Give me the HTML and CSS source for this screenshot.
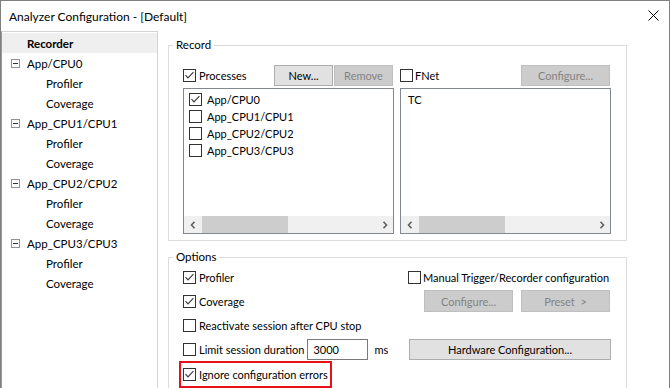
FILE: index.html
```html
<!DOCTYPE html>
<html lang="en">
<head>
    <meta charset="UTF-8">
    <meta name="viewport" content="width=device-width, initial-scale=1.0">
    <title>Analyzer Configuration</title>
    <link rel="stylesheet" href="styles.css">
</head>
<body>

<div class="window">
    <div class="titlebar">
        <span class="title">Analyzer Configuration - [Default]</span>
        <svg class="close" width="11" height="11" viewBox="0 0 11 11">
            <path d="M0.5 0.5 L10.5 10.5 M10.5 0.5 L0.5 10.5" stroke="#000" stroke-width="1" fill="none"/>
        </svg>
    </div>

    <div class="main">
        <!-- Navigation tree -->
        <ul class="tree">
            <li class="row root selected">Recorder</li>
            <li class="row node"><span class="toggle"></span>App/CPU0</li>
            <li class="row leaf">Profiler</li>
            <li class="row leaf">Coverage</li>
            <li class="row node"><span class="toggle"></span>App_CPU1/CPU1</li>
            <li class="row leaf">Profiler</li>
            <li class="row leaf">Coverage</li>
            <li class="row node"><span class="toggle"></span>App_CPU2/CPU2</li>
            <li class="row leaf">Profiler</li>
            <li class="row leaf">Coverage</li>
            <li class="row node"><span class="toggle"></span>App_CPU3/CPU3</li>
            <li class="row leaf">Profiler</li>
            <li class="row leaf">Coverage</li>
        </ul>

        <div class="content">
            <!-- Record -->
            <fieldset class="group record">
                <legend>Record</legend>
                <div class="record-cols">
                    <div class="col">
                        <div class="col-head">
                            <label class="check"><span class="box checked"><svg viewBox="0 0 11 11"><path d="M1.5 5.2 L4 7.8 L9.4 2.2"/></svg></span>Processes</label>
                            <div class="btns">
                                <button class="btn small">New...</button>
                                <button class="btn small" disabled>Remove</button>
                            </div>
                        </div>
                        <div class="list">
                            <div class="list-item"><span class="box checked"><svg viewBox="0 0 11 11"><path d="M1.5 5.2 L4 7.8 L9.4 2.2"/></svg></span>App/CPU0</div>
                            <div class="list-item"><span class="box"></span>App_CPU1/CPU1</div>
                            <div class="list-item"><span class="box"></span>App_CPU2/CPU2</div>
                            <div class="list-item"><span class="box"></span>App_CPU3/CPU3</div>
                            <div class="hscroll">
                                <span class="arrow"><svg width="6" height="8" viewBox="0 0 6 8"><path d="M4.5 0.8 L1.5 4 L4.5 7.2"/></svg></span>
                                <span class="thumb"></span>
                                <span class="arrow end"><svg width="6" height="8" viewBox="0 0 6 8"><path d="M1.5 0.8 L4.5 4 L1.5 7.2"/></svg></span>
                            </div>
                        </div>
                    </div>
                    <div class="col">
                        <div class="col-head">
                            <label class="check tight"><span class="box"></span>FNet</label>
                            <div class="btns">
                                <button class="btn wide" disabled>Configure...</button>
                            </div>
                        </div>
                        <div class="list">
                            <div class="list-text">TC</div>
                            <div class="hscroll">
                                <span class="arrow"><svg width="6" height="8" viewBox="0 0 6 8"><path d="M4.5 0.8 L1.5 4 L4.5 7.2"/></svg></span>
                                <span class="thumb"></span>
                                <span class="arrow end"><svg width="6" height="8" viewBox="0 0 6 8"><path d="M1.5 0.8 L4.5 4 L1.5 7.2"/></svg></span>
                            </div>
                        </div>
                    </div>
                </div>
            </fieldset>

            <!-- Options -->
            <fieldset class="group options">
                <legend>Options</legend>
                <div class="options-grid">
                    <label class="check"><span class="box checked"><svg viewBox="0 0 11 11"><path d="M1.5 5.2 L4 7.8 L9.4 2.2"/></svg></span>Profiler</label>
                    <label class="check tight"><span class="box"></span>Manual Trigger/Recorder configuration</label>

                    <label class="check"><span class="box checked"><svg viewBox="0 0 11 11"><path d="M1.5 5.2 L4 7.8 L9.4 2.2"/></svg></span>Coverage</label>
                    <div class="btn-pair">
                        <button class="btn wide tall" disabled>Configure...</button>
                        <button class="btn wide tall" disabled>Preset&nbsp; &gt;</button>
                    </div>

                    <label class="check"><span class="box"></span>Reactivate session after CPU stop</label>
                    <div></div>

                    <div class="limit">
                        <label class="check"><span class="box"></span>Limit session duration</label>
                        <input class="num" type="text" value="3000">
                        <span class="unit">ms</span>
                    </div>
                    <button class="btn hw">Hardware Configuration...</button>

                    <label class="check marked"><span class="box checked"><svg viewBox="0 0 11 11"><path d="M1.5 5.2 L4 7.8 L9.4 2.2"/></svg></span>Ignore configuration errors</label>
                    <div></div>
                </div>
            </fieldset>
        </div>
    </div>
</div>

</body>
</html>
```

FILE: styles.css
```css
html, body {
    margin: 0;
    height: 100%;
    overflow: hidden;
    background: #fff;
}
body {
    font-family: Lato, "Noto Sans", sans-serif;
    font-size: 11px;
    color: #000;
}
.window {
    height: 400px;
    border: 1px solid #7f7f7f;
    border-bottom: none;
    display: flex;
    flex-direction: column;
    box-sizing: border-box;
}
.titlebar {
    height: 30px;
    display: flex;
    align-items: center;
    justify-content: space-between;
    padding: 0 10px 0 8px;
    flex-shrink: 0;
    font-size: 12px;
}
.close {
    display: block;
    margin-top: -1px;
}
.main {
    flex: 1;
    display: flex;
}

/* tree */
.tree {
    list-style: none;
    margin: 0;
    padding: 1px 0 0 0;
    width: 157px;
    box-sizing: border-box;
    border-left: 1px solid #9a9a9a;
    border-top: 1px solid #d4d4d4;
    border-right: 1px solid #d4d4d4;
    flex-shrink: 0;
    font-size: 11.5px;
}
.row {
    height: 20px;
    display: flex;
    align-items: center;
    white-space: nowrap;
}
.root {
    padding-left: 25px;
    font-weight: bold;
}
.selected {
    background: #efefef;
}
.node {
    padding-left: 9px;
}
.leaf {
    padding-left: 44px;
}
.toggle {
    width: 9px;
    height: 9px;
    box-sizing: border-box;
    border: 1px solid #919191;
    margin-right: 7px;
    position: relative;
}
.toggle::after {
    content: "";
    position: absolute;
    left: 1px;
    top: 3px;
    width: 5px;
    height: 1px;
    background: #333;
}

/* right side */
.content {
    flex: 1;
    padding: 6px 42px 0 10px;
}
.group {
    margin: 0;
    min-width: 0;
    border: 1px solid #dcdcdc;
    padding: 0 15px 0 14px;
}
.group legend {
    line-height: 16px;
    padding: 0 3px;
    margin-left: -10px;
    font-size: 11.5px;
}
.record {
    padding-top: 12px;
    padding-bottom: 6px;
}
.options {
    margin-top: 8px;
    padding-bottom: 30px;
}
.record-cols {
    display: grid;
    grid-template-columns: 211px 211px;
    column-gap: 6px;
}
.col-head {
    height: 21px;
    display: flex;
    align-items: center;
    justify-content: space-between;
    margin-bottom: 2px;
}
.btns {
    display: flex;
    gap: 1px;
    margin-right: 1px;
}

/* checkboxes */
.check {
    display: flex;
    align-items: center;
    white-space: nowrap;
}
.box {
    width: 13px;
    height: 13px;
    box-sizing: border-box;
    border: 1px solid #333;
    background: #fff;
    margin-right: 3px;
    flex-shrink: 0;
}
.tight .box {
    margin-right: 2px;
}
.box svg {
    display: block;
    width: 11px;
    height: 11px;
}
.box svg path {
    fill: none;
    stroke: #3c3c3c;
    stroke-width: 1.2;
}

/* buttons */
.btn {
    font: inherit;
    height: 21px;
    padding: 0;
    border: 1px solid #adadad;
    background: #e1e1e1;
    color: #000;
}
.btn:disabled {
    background: #cccccc;
    border-color: #bfbfbf;
    color: #838383;
}
.small {
    width: 59px;
}
.wide {
    width: 89px;
}
.tall {
    height: 22px;
}

/* list boxes */
.list {
    height: 146px;
    box-sizing: border-box;
    border: 1px solid #828790;
    display: flex;
    flex-direction: column;
    padding-top: 2px;
}
.list-item {
    height: 17px;
    display: flex;
    align-items: center;
    padding-left: 5px;
    white-space: nowrap;
}
.list-item .box {
    margin-right: 5px;
}
.list-text {
    height: 17px;
    line-height: 17px;
    padding-left: 7px;
}
.hscroll {
    margin-top: auto;
    height: 17px;
    background: #f0f0f0;
    display: flex;
    align-items: center;
}
.arrow {
    width: 17px;
    height: 17px;
    display: flex;
    align-items: center;
    justify-content: center;
}
.arrow.end {
    margin-left: auto;
}
.arrow path {
    fill: none;
    stroke: #606060;
    stroke-width: 1.6;
}
.thumb {
    width: 86px;
    height: 17px;
    margin-left: 1px;
    background: #cdcdcd;
}

/* options grid */
.options-grid {
    display: grid;
    grid-template-columns: 225px 203px;
    grid-auto-rows: 24px;
    align-items: center;
}
.btn-pair {
    display: flex;
    justify-content: flex-end;
    gap: 8px;
    margin-right: 1px;
}
.limit {
    display: flex;
    align-items: center;
}
.num {
    font: inherit;
    width: 61px;
    height: 21px;
    box-sizing: border-box;
    border: 1px solid #7a7a7a;
    padding: 0 5px;
    margin-left: 3px;
    outline: none;
}
.unit {
    margin-left: 6px;
}
.hw {
    width: 202px;
    margin-left: 1px;
}
.marked {
    justify-self: start;
    align-self: start;
    height: 27px;
    box-sizing: border-box;
    border: 2px solid #e8101a;
    margin-left: -4px;
    padding: 0 2px;
}
```
